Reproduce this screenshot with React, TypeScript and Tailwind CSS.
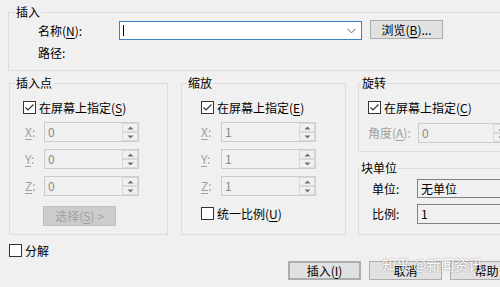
import React from "react";

const Check = ({ on }: { on?: boolean }) => (
  <svg width="13" height="13" viewBox="0 0 13 13" className="shrink-0">
    <rect x="0.5" y="0.5" width="12" height="12" fill="#ffffff" stroke="#333333" />
    {on && (
      <path d="M2.5 6.5 L5 9 L10.5 3.5" fill="none" stroke="#333333" strokeWidth="1.2" />
    )}
  </svg>
);

const Arrow = ({ up }: { up?: boolean }) => (
  <svg width="7" height="4" viewBox="0 0 7 4">
    <path d={up ? "M0.5 3.5 L3.5 0.5 L6.5 3.5 Z" : "M0.5 0.5 L3.5 3.5 L6.5 0.5 Z"} fill="#707070" />
  </svg>
);

const SpinBox = ({ value, className }: { value: string; className: string }) => (
  <div className={`flex h-[20px] border border-[#cccccc] bg-[#f0f0f0] ${className}`}>
    <div className="flex-1 pl-[3px] leading-[18px] text-[#8a8a8a]">{value}</div>
    <div className="flex flex-col w-[16px]">
      <div className="flex-1 flex items-center justify-center border border-[#d9d9d9]">
        <Arrow up />
      </div>
      <div className="flex-1 flex items-center justify-center border border-[#d9d9d9]">
        <Arrow />
      </div>
    </div>
  </div>
);

const Axis = ({ k, v, lw }: { k: string; v: string; lw: string }) => (
  <div className="flex items-center">
    <div className={`${lw} text-[#a0a0a0]`}>
      <u className="underline-offset-2">{k}</u>:
    </div>
    <SpinBox value={v} className="w-[95px]" />
  </div>
);

const Btn = ({ children, className = "" }: { children: React.ReactNode; className?: string }) => (
  <div
    className={`flex items-center justify-center h-[19px] w-[73px] border border-[#adadad] bg-[#e1e1e1] ${className}`}
  >
    {children}
  </div>
);

const Legend = ({ children, ml }: { children: React.ReactNode; ml: string }) => (
  <legend className={`${ml} px-[1px] leading-[16px]`}>{children}</legend>
);

const App = () => {
  return (
    <div className="relative w-[500px] h-[287px] overflow-hidden bg-[#f0f0f0] text-[12px] leading-[16px] text-black font-['Noto_Sans_CJK_SC','Microsoft_YaHei',sans-serif]">
      <div className="w-[560px] pl-[8px] pt-[4px]">
        {/* 插入 */}
        <fieldset className="w-[540px] border border-[#dcdcdc]">
          <Legend ml="ml-[6px]">插入</Legend>
          <div className="pl-[29px] pt-[1px] pb-[9px]">
            <div className="flex items-center">
              <div className="w-[81px]">
                名称(<u className="underline-offset-2">N</u>):
              </div>
              <div className="flex items-center w-[243px] h-[19px] border border-[#3b80c4] bg-white">
                <div className="ml-[3px] w-[1px] h-[11px] bg-black" />
                <div className="flex-1" />
                <svg width="9" height="6" viewBox="0 0 9 6" className="mr-[5px]">
                  <path d="M0.5 0.8 L4.5 4.8 L8.5 0.8" fill="none" stroke="#606060" strokeWidth="1" />
                </svg>
              </div>
              <Btn className="ml-[8px] w-[71px] -mt-[2px]">
                浏览(<u className="underline-offset-2">B</u>)...
              </Btn>
            </div>
            <div className="mt-[5px]">路径:</div>
          </div>
        </fieldset>

        <div className="flex mt-[4px] ml-[1px]">
          {/* 插入点 */}
          <fieldset className="w-[159px] border border-[#dcdcdc]">
            <Legend ml="ml-[5px]">插入点</Legend>
            <div className="pl-[13px] pt-[10px] pb-[8px]">
              <div className="flex items-center h-[13px] gap-[3px]">
                <Check on />
                <span>
                  在屏幕上指定(<u className="underline-offset-2">S</u>)
                </span>
              </div>
              <div className="ml-[2px] mt-[8px] flex flex-col gap-[7px]">
                <Axis k="X" v="0" lw="w-[19px]" />
                <Axis k="Y" v="0" lw="w-[19px]" />
                <Axis k="Z" v="0" lw="w-[19px]" />
              </div>
              <div className="ml-[20px] mt-[10px] flex items-center justify-center h-[20px] w-[73px] border border-[#bfbfbf] bg-[#cccccc] text-[#a0a0a0]">
                选择(<u className="underline-offset-2">S</u>) &gt;
              </div>
            </div>
          </fieldset>

          {/* 缩放 */}
          <fieldset className="ml-[13px] w-[165px] border border-[#dcdcdc]">
            <Legend ml="ml-[5px]">缩放</Legend>
            <div className="pl-[19px] pt-[10px] pb-[8px]">
              <div className="flex items-center h-[13px] gap-[3px]">
                <Check on />
                <span>
                  在屏幕上指定(<u className="underline-offset-2">E</u>)
                </span>
              </div>
              <div className="mt-[8px] flex flex-col gap-[7px]">
                <Axis k="X" v="1" lw="w-[20px]" />
                <Axis k="Y" v="1" lw="w-[20px]" />
                <Axis k="Z" v="1" lw="w-[20px]" />
              </div>
              <div className="mt-[11px] flex items-center h-[13px] gap-[3px]">
                <Check />
                <span>
                  统一比例(<u className="underline-offset-2">U</u>)
                </span>
              </div>
            </div>
          </fieldset>

          {/* 旋转 / 块单位 */}
          <div className="ml-[12px] w-[160px] flex flex-col">
            <fieldset className="border border-[#dcdcdc]">
              <Legend ml="ml-[2px]">旋转</Legend>
              <div className="pl-[9px] pt-[10px] pb-[8px]">
                <div className="flex items-center h-[13px] gap-[3px]">
                  <Check on />
                  <span>
                    在屏幕上指定(<u className="underline-offset-2">C</u>)
                  </span>
                </div>
                <div className="mt-[9px] flex items-center">
                  <div className="w-[50px] text-[#a0a0a0]">
                    角度(<u className="underline-offset-2">A</u>):
                  </div>
                  <SpinBox value="0" className="w-[92px]" />
                </div>
              </div>
            </fieldset>
            <fieldset className="mt-[8px] flex-1 border border-[#dcdcdc]">
              <Legend ml="ml-[1px]">块单位</Legend>
              <div className="pl-[13px] pt-[3px]">
                <div className="flex items-center">
                  <div className="w-[45px]">单位:</div>
                  <div className="w-[100px] h-[19px] pl-[3px] leading-[17px] border border-[#828282]">
                    无单位
                  </div>
                </div>
                <div className="mt-[6px] flex items-center">
                  <div className="w-[45px]">比例:</div>
                  <div className="w-[100px] h-[20px] pl-[3px] leading-[18px] border border-[#828282]">
                    1
                  </div>
                </div>
              </div>
            </fieldset>
          </div>
        </div>

        <div className="ml-[1px] mt-[9px] flex items-center h-[13px] gap-[3px]">
          <Check />
          <span>分解</span>
        </div>

        <div className="ml-[280px] mt-[4px] flex gap-[8px]">
          <Btn className="border-[2px] border-[#2f7fd0]">
            插入(<u className="underline-offset-2">I</u>)
          </Btn>
          <Btn>取消</Btn>
          <Btn>帮助</Btn>
        </div>
      </div>

      <div className="absolute left-[382px] top-[256px] text-[14px] leading-[16px] text-white opacity-90 [text-shadow:0_0_2px_rgba(0,0,0,0.45)]">
        知乎 @新闻资讯
      </div>
    </div>
  );
};

export default App;
